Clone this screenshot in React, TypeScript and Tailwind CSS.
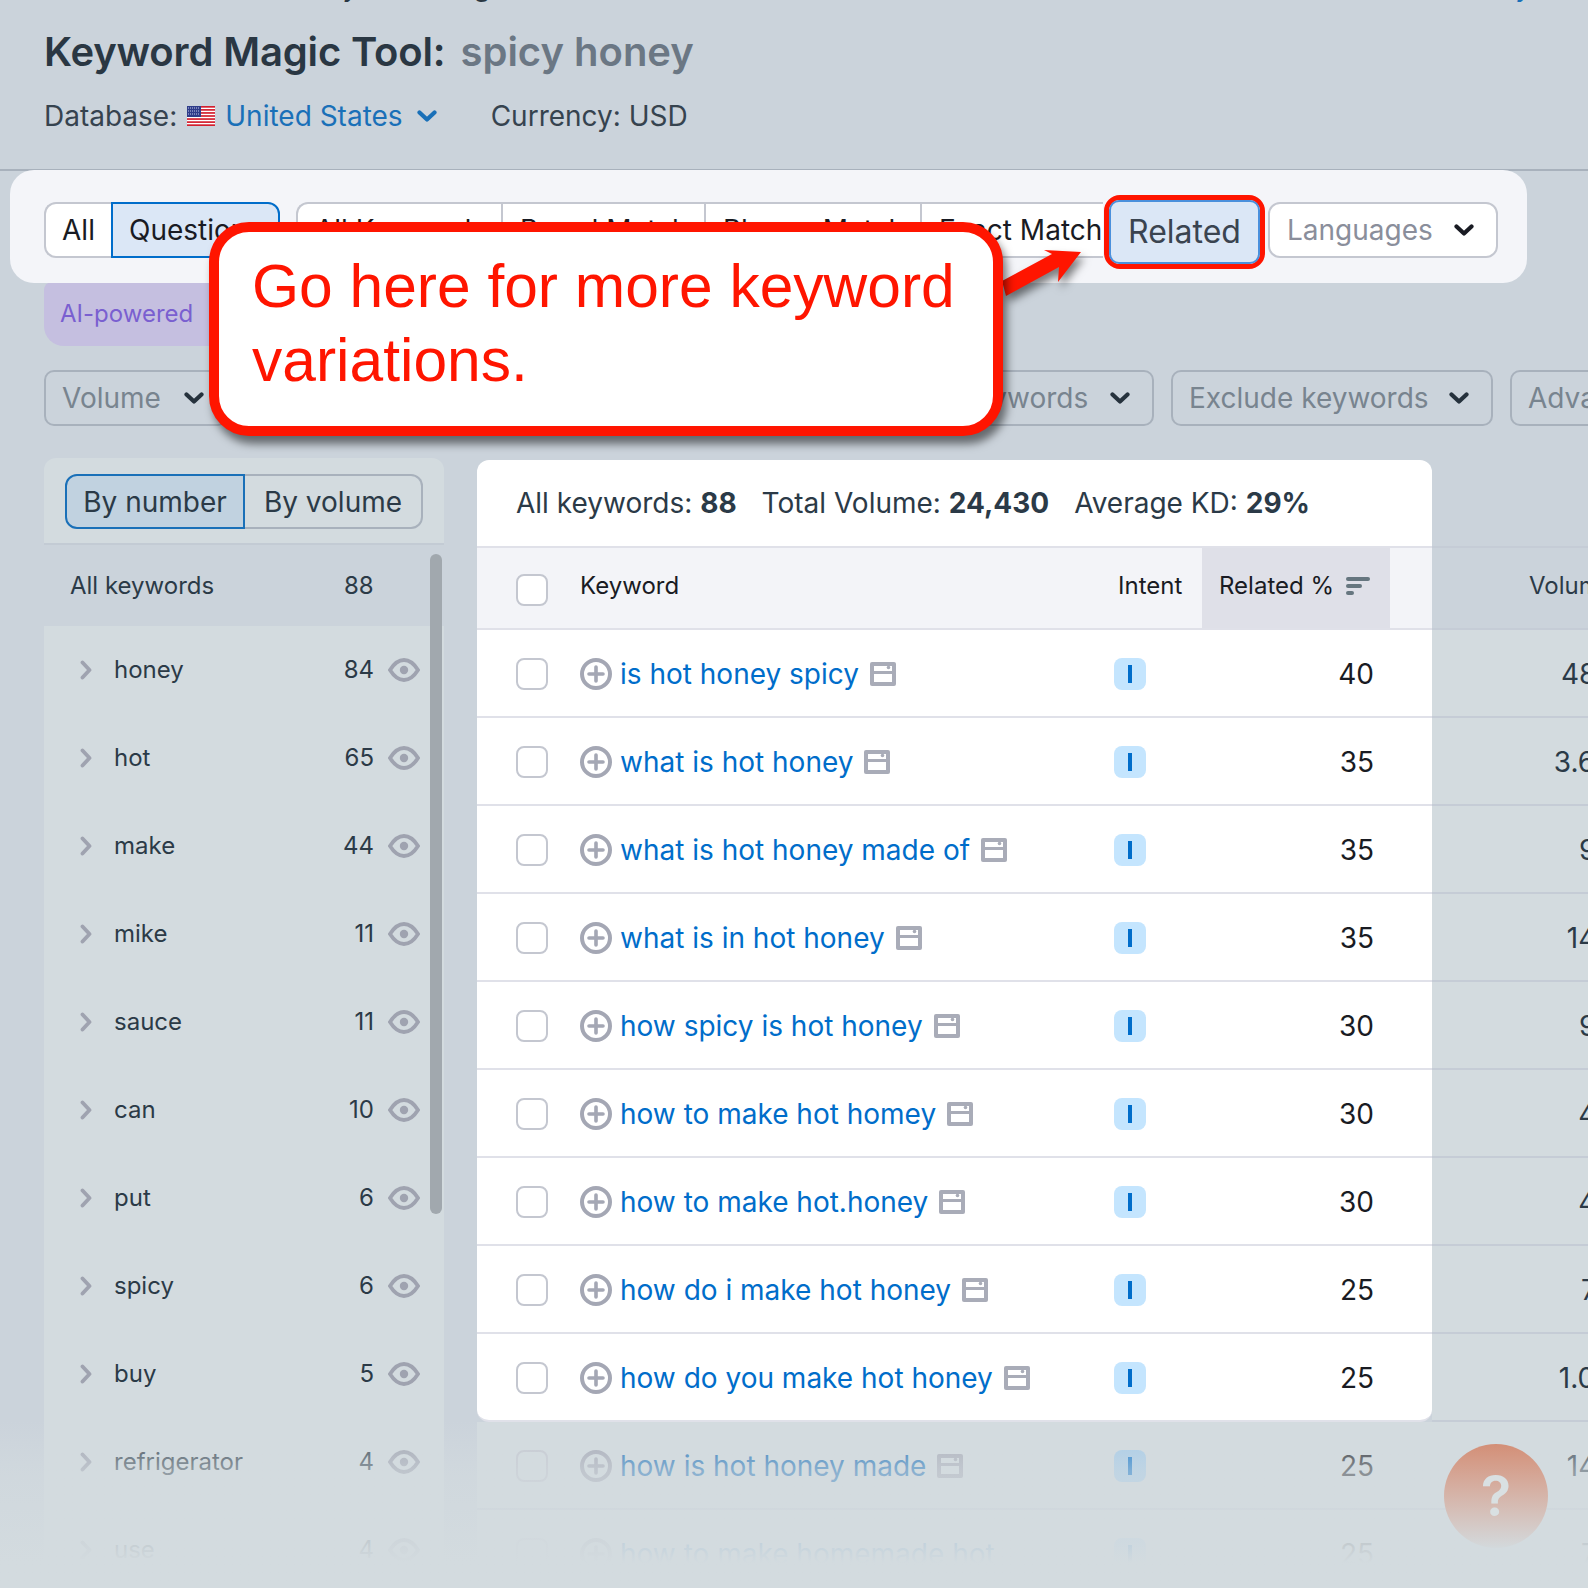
import React from "react";

const leftRows: [string, number][] = [
  ["honey", 84], ["hot", 65], ["make", 44], ["mike", 11], ["sauce", 11], ["can", 10],
  ["put", 6], ["spicy", 6], ["buy", 5], ["refrigerator", 4], ["use", 4],
];

const rows: [string, number, string][] = [
  ["is hot honey spicy", 40, "480"],
  ["what is hot honey", 35, "3.6K"],
  ["what is hot honey made of", 35, "90"],
  ["what is in hot honey", 35, "140"],
  ["how spicy is hot honey", 30, "90"],
  ["how to make hot homey", 30, "40"],
  ["how to make hot.honey", 30, "40"],
  ["how do i make hot honey", 25, "70"],
  ["how do you make hot honey", 25, "1.0K"],
  ["how is hot honey made", 25, "140"],
  ["how to make homemade hot", 25, "70"],
];

function Chevron({ className }: { className: string }) {
  return (
    <svg viewBox="0 0 20 12" className={className} fill="none" stroke="currentColor" strokeWidth="4.2" strokeLinecap="round" strokeLinejoin="round">
      <path d="M2.5 2.5 10 9.5l7.5-7" />
    </svg>
  );
}

function Eye() {
  return (
    <svg viewBox="0 0 32 24" className="w-8 h-6 text-[#9fa3b0]" fill="none">
      <path d="M2 12C7 4 12 2 16 2s9 2 14 10c-5 8-10 10-14 10S7 20 2 12Z" stroke="currentColor" strokeWidth="3.8" />
      <circle cx="16" cy="12" r="4.2" fill="currentColor" />
    </svg>
  );
}

function Plus() {
  return (
    <svg viewBox="0 0 32 32" className="w-8 h-8 flex-none text-[#a4a7b4]" fill="none" stroke="currentColor">
      <circle cx="16" cy="16" r="14" strokeWidth="4" />
      <path d="M16 9v14M9 16h14" strokeWidth="3.6" strokeLinecap="round" />
    </svg>
  );
}

function WindowIcon({ paper }: { paper: string }) {
  return (
    <svg viewBox="0 0 26 24" className="w-[26px] h-6 flex-none ml-[11px] text-[#a9acb8]">
      <rect width="26" height="24" rx="2" fill="currentColor" />
      <rect x="4" y="4" width="18" height="5" fill={paper} />
      <rect x="4" y="12" width="18" height="8" fill={paper} />
      <circle cx="18.5" cy="5.5" r="1.8" fill="currentColor" />
    </svg>
  );
}

function Flag() {
  const stripes = [0, 3.05, 6.1, 9.15, 12.2, 15.25, 18.3];
  return (
    <svg viewBox="0 0 28 20" className="w-7 h-5 flex-none">
      <rect width="28" height="20" fill="#ffffff" />
      {stripes.map((y) => (
        <rect key={y} y={y} width="28" height="1.7" fill="#d3202f" />
      ))}
      <rect width="14" height="11" fill="#2f3d8a" />
      <path d="M1 2h12M1 5h12M1 8h12" stroke="#c7cdea" strokeWidth="1" strokeDasharray="1 1" />
    </svg>
  );
}

function Filter({ label, w }: { label: string; w: string }) {
  return (
    <div className={`${w} h-[56px] flex-none flex items-center justify-between pl-4 pr-[22px] border-2 border-[#a8b1bc] rounded-[10px] text-[28px] text-[#78848f] whitespace-nowrap overflow-hidden`}>
      <span>{label}</span>
      <Chevron className="w-5 h-3 text-[#26323d] flex-none ml-2" />
    </div>
  );
}

function Row({ row, last, dim, noIcon }: { row: [string, number, string]; last?: boolean; dim?: boolean; noIcon?: boolean }) {
  const [kw, rel, vol] = row;
  return (
    <div className="flex h-[88px]">
      <div className={`w-[955px] flex-none flex items-center pl-[39px] pt-[2px] border-b-2 ${dim ? "bg-[#d3dbdf] border-[#c5ccd6]" : "bg-white border-[#e0e1e9]"} ${last ? "rounded-bl-[12px] rounded-br-[12px]" : ""}`}>
        <div className={`w-8 h-8 flex-none rounded-lg border-2 border-[#c4c7d0] ${dim ? "" : "bg-white"}`} />
        <div className="w-[534px] flex-none ml-8 flex items-center">
          <Plus />
          <span className={`ml-2 text-[28px] whitespace-nowrap ${dim ? "text-[#1a70b8]" : "text-[#006dca]"}`}>{kw}</span>
          {!noIcon && <WindowIcon paper={dim ? "#d3dbdf" : "#ffffff"} />}
        </div>
        <div className={`w-8 h-8 flex-none rounded-lg flex items-center justify-center ${dim ? "bg-[#a4cbea]" : "bg-[#c4e5fe]"}`}>
          <span className="w-1 h-[18px] bg-[#006dca]" />
        </div>
        <div className="flex-1 text-right pr-[58px] text-[28px] text-[#191b23]">{rel}</div>
      </div>
      <div className="w-[182px] flex-none flex items-center justify-end pt-[2px] bg-[#d3dbdf] border-b-2 border-[#c5ccd6] text-[28px] text-[#2b3a47]">{vol}</div>
    </div>
  );
}

export default function App() {
  return (
    <div className="relative w-[1588px] h-[1588px] overflow-hidden bg-[#cbd3db] font-['Inter',sans-serif]">
      {/* page header */}
      <header className="h-[169px] pl-[44px] pr-[45px] flex flex-col">
        <div className="-mt-[30px] h-[33px] flex justify-between text-[28px] leading-[33px]">
          <span className="ml-[193px] text-[#2a3743] whitespace-nowrap">SEO &nbsp;Keyword Magic Tool</span>
          <span className="mr-3 text-[#1a70b8] whitespace-nowrap">Search history</span>
        </div>
        <div className="mt-[25px] flex items-center h-[48px] text-[40px] font-semibold leading-[48px] whitespace-nowrap">
          <span className="text-[#2a3743] tracking-[-0.15px]">Keyword Magic Tool:</span>
          <span className="ml-[15px] text-[#6b7784]">spicy honey</span>
        </div>
        <div className="mt-[22px] flex items-center h-[36px] text-[28px] text-[#36434f] whitespace-nowrap">
          <span>Database:</span>
          <span className="ml-2.5"><Flag /></span>
          <span className="ml-2.5 text-[#1a70b8]">United States</span>
          <Chevron className="w-5 h-3 ml-3.5 text-[#1a70b8]" />
          <span className="ml-[54px]">Currency: USD</span>
        </div>
      </header>
      <div className="h-0.5 bg-[#a8b1bc]" />

      {/* match type card */}
      <div className="relative z-10 ml-[10px] w-[1517px] h-[113px] rounded-[24px] bg-[#f4f5f9] pl-[34px] pt-[7px] flex items-center -mt-px">
        <div className="flex items-center text-[28px] text-[#191b23] whitespace-nowrap">
          <div className="w-[67px] h-14 flex items-center justify-center bg-white border-2 border-r-0 border-[#c4c7d0] rounded-l-xl">All</div>
          <div className="w-[169px] h-14 pl-[16px] flex items-center bg-[#dbe7f6] border-2 border-[#006dca] rounded-r-xl">Questions</div>
          <div className="ml-4 w-[205px] h-14 pl-[17px] flex items-center bg-white border-2 border-r-0 border-[#c4c7d0] rounded-l-xl">All Keywords</div>
          <div className="w-[203px] h-14 pl-[17px] flex items-center bg-white border-2 border-r-0 border-[#c4c7d0]">Broad Match</div>
          <div className="w-[216px] h-14 pl-[17px] flex items-center bg-white border-2 border-r-0 border-[#c4c7d0]">Phrase Match</div>
          <div className="w-[183px] h-14 pl-[17px] flex items-center bg-white border-2 border-r-0 border-[#c4c7d0]">Exact Match</div>
        </div>
        <div className="ml-px mt-1 w-[161px] h-[74px] flex-none border-[5px] border-[#ff1500] rounded-[16px] bg-white">
          <div className="w-full h-full rounded-[10px] bg-[#dbe7f6] border-2 border-[#4a90dc] flex items-center justify-center text-[32px] text-[#3a4450]">Related</div>
        </div>
        <div className="ml-[3px] w-[230px] h-14 flex-none flex items-center justify-between pl-[17px] pr-[22px] bg-white border-2 border-[#c4c7d0] rounded-xl text-[28px] text-[#8a8e9b]">
          <span>Languages</span>
          <Chevron className="w-5 h-3 text-[#191b23]" />
        </div>
      </div>

      {/* AI pill */}
      <div className="ml-[44px] -mt-px w-[240px] h-[64px] rounded-b-[20px] rounded-t-[8px] bg-[#c5bfe0] pl-4 flex items-center text-[24px] text-[#7a5fd0]">AI-powered</div>

      {/* filters */}
      <div className="ml-[44px] mt-6 flex gap-[18px]">
        <Filter label="Volume" w="w-[184px]" />
        <Filter label="KD %" w="w-[126px]" />
        <Filter label="Intent" w="w-[140px]" />
        <Filter label="CPC" w="w-[140px]" />
        <Filter label="Com." w="w-[114px]" />
        <Filter label="Include keywords" w="w-[316px]" />
        <Filter label="Exclude keywords" w="w-[322px] -ml-px" />
        <Filter label="Advanced filters" w="w-[300px] -ml-px" />
      </div>

      {/* body */}
      <div className="mt-[32px] flex items-start">
        {/* left panel */}
        <aside className="relative ml-[44px] w-[400px] h-[1130px] flex-none rounded-t-[12px] bg-[#d3dbdf] overflow-hidden">
          <div className="h-[87px] pt-4 pl-[21px] border-b-2 border-[#c3cbd4]">
            <div className="flex w-[358px] h-[55px] text-[28px] text-[#2b3a47]">
              <div className="w-[180px] flex items-center justify-center bg-[#c1d2e0] border-2 border-[#1a70b8] rounded-l-xl">By number</div>
              <div className="flex-1 flex items-center justify-center border-2 border-l-0 border-[#a8b1bc] rounded-r-xl">By volume</div>
            </div>
          </div>
          <div className="h-[81px] flex items-center pl-[26px] bg-[#cbd3db] text-[24px] text-[#2b3a47]">
            <span className="w-[274px]">All keywords</span>
            <span className="w-[27px] text-right">88</span>
          </div>
          {leftRows.map(([name, n]) => (
            <div key={name} className="h-[88px] flex items-center pl-9 text-[24px] text-[#2b3a47]">
              <svg viewBox="0 0 12 20" className="w-3 h-5 flex-none text-[#9fa3b0]" fill="none" stroke="currentColor" strokeWidth="3.8" strokeLinecap="round" strokeLinejoin="round">
                <path d="M2.5 2.5 9.5 10l-7 7.5" />
              </svg>
              <span className="ml-[22px] w-[210px]">{name}</span>
              <span className="w-[50px] text-right">{n}</span>
              <span className="ml-3.5"><Eye /></span>
            </div>
          ))}
          <div className="absolute left-[386px] top-[96px] w-3 h-[660px] rounded-md bg-[#a1a8ae]" />
        </aside>

        {/* table */}
        <section className="ml-[33px] mt-[2px] flex-none w-[1137px]">
          <div className="w-[955px] h-[86px] flex items-center pl-[39px] pb-px bg-white rounded-t-[12px] text-[28px] text-[#2b3a47] whitespace-nowrap">
            <span>All keywords: <b className="font-bold">88</b></span>
            <span className="ml-[25px]">Total Volume: <b className="font-bold">24,430</b></span>
            <span className="ml-[25px]">Average KD: <b className="font-bold">29%</b></span>
          </div>
          <div className="flex h-[84px] text-[24px]">
            <div className="w-[955px] flex-none flex items-stretch border-y-2 border-[#e0e1e9] bg-[#f3f4f8] text-[#191b23]">
              <div className="pl-[39px] pt-1 flex items-center">
                <div className="w-8 h-8 rounded-lg border-2 border-[#c4c7d0] bg-white" />
              </div>
              <div className="ml-8 w-[538px] flex items-center -mt-1">Keyword</div>
              <div className="w-[84px] flex items-center -mt-1">Intent</div>
              <div className="w-[188px] flex items-center pl-[17px] bg-[#dfe0e8]">
                <span className="-mt-1">Related %</span>
                <svg viewBox="0 0 24 20" className="w-6 h-5 ml-3 -mt-1 text-[#66767f]" fill="currentColor">
                  <rect width="24" height="4" y="1" rx="2" />
                  <rect width="16" height="4" y="8" rx="2" />
                  <rect width="8" height="4" y="15" rx="2" />
                </svg>
              </div>
            </div>
            <div className="w-[182px] flex-none flex items-center pl-[97px] pb-1 border-y-2 border-[#c5ccd6] text-[#2b3a47] whitespace-nowrap">Volume</div>
          </div>
          {rows.map((r, i) => (
            <Row key={r[0]} row={r} last={i === 8} dim={i > 8} noIcon={i === 10} />
          ))}
        </section>
      </div>

      {/* bottom fade */}
      <div className="absolute z-20 left-0 right-0 top-[1421px] h-[167px] bg-linear-to-b from-[#d3dbdf00] via-[#d3dbdf99] via-30% to-[#d3dbdf] to-85%" />

      {/* help button */}
      <div className="absolute z-30 left-[1444px] top-[1444px] w-[104px] h-[104px] rounded-full bg-linear-to-b from-[#d38f77] to-[#d3d9dc] flex items-center justify-center text-[56px] font-semibold text-[#d9e0e2]">?</div>

      {/* callout */}
      <div className="absolute z-40 left-[209px] top-[222px] w-[794px] h-[214px] rounded-[40px] border-[10px] border-[#ff1500] bg-white shadow-[4px_8px_8px_rgba(0,0,0,0.5)] pl-[33px] pt-[17px] font-['Liberation_Sans',Arial,sans-serif] text-[60.5px] leading-[74px] text-[#ff1500]">
        Go here for more keyword
        <br />
        variations.
      </div>
      <svg viewBox="0 0 90 60" className="absolute z-30 left-[1001px] top-[245px] w-[90px] h-[60px] overflow-visible drop-shadow-[3px_6px_4px_rgba(0,0,0,0.5)]">
        <path d="M1 36 L51 9 L43 5 L80 7 L57 37 L58 22 L5 51 Z" fill="#ff1500" />
      </svg>
    </div>
  );
}
